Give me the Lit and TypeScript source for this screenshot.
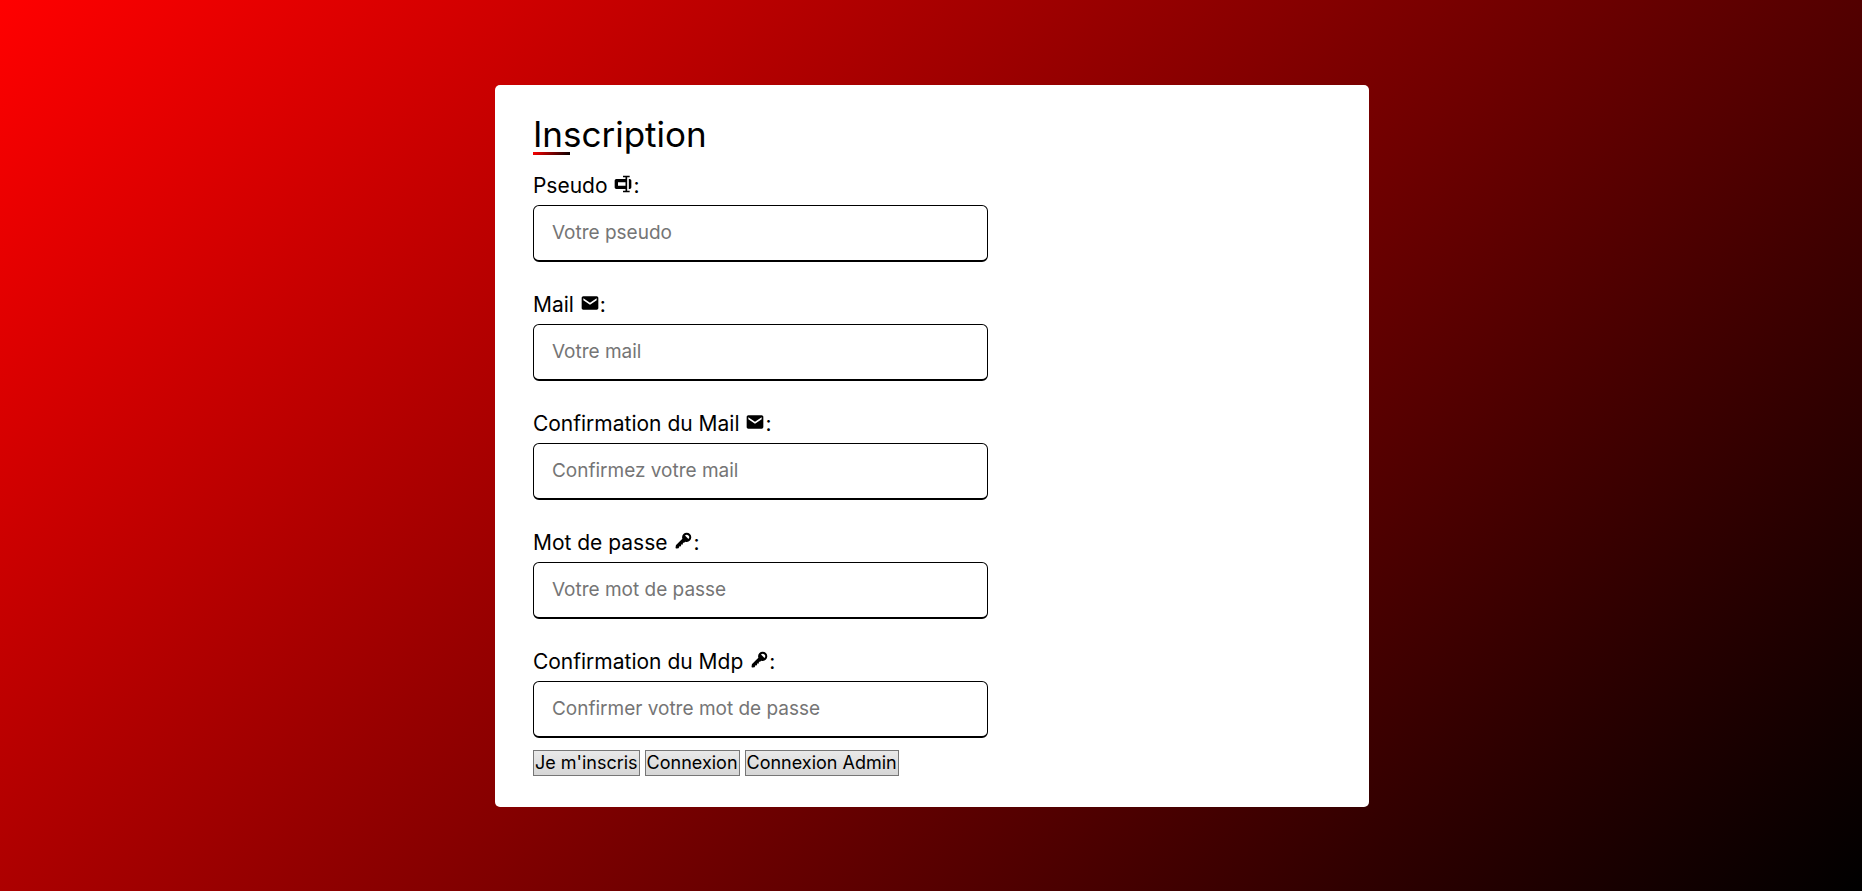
import { LitElement, html, css, svg } from "lit";
import { customElement } from "lit/decorators.js";

const icons = {
  rename: svg`<path fill-rule="evenodd" d="M12 2h8v2h-3v16h3v2h-8v-2h3v-2H4c-1.1 0-2-.9-2-2V8c0-1.100.9-2 2-2h11V4h-3zM6 10v4h9v-4z"/><path d="M19 6h1c1.100 0 2 .9 2 2v8c0 1.100-.9 2-2 2h-1z"/>`,
  mail: svg`<path d="M20 4H4c-1.103 0-2 .897-2 2v12c0 1.103.897 2 2 2h16c1.103 0 2-.897 2-2V6c0-1.103-.897-2-2-2zm0 4.700-8 5.334L4 8.700V6.297l8 5.333 8-5.333V8.700z"/>`,
  key: svg`<path d="M3.433 17.325 3.079 19.800a1 1 0 0 0 1.131 1.131l2.475-.354C7.060 20.524 8 18 8 18s.472.405.665.466c.412.130.813-.274.948-.684L10 16.010s.577.292.786.335c.266.055.524-.109.707-.293a.988.988 0 0 0 .241-.391L12 14.010s.675.187.906.214c.263.030.519-.104.707-.293l1.138-1.137a5.502 5.502 0 0 0 5.581-1.338 5.507 5.507 0 0 0 0-7.778 5.507 5.507 0 0 0-7.778 0 5.500 5.500 0 0 0-1.338 5.581l-7.501 7.500a.994.994 0 0 0-.282.566zM18.504 5.506a2.919 2.919 0 0 1 0 4.122l-4.122-4.122a2.919 2.919 0 0 1 4.122 0z"/>`,
};

interface Field {
  id: string;
  label: string;
  icon: keyof typeof icons;
  type: string;
  placeholder: string;
}

const fields: Field[] = [
  { id: "pseudo", label: "Pseudo", icon: "rename", type: "text", placeholder: "Votre pseudo" },
  { id: "mail", label: "Mail", icon: "mail", type: "email", placeholder: "Votre mail" },
  { id: "mail2", label: "Confirmation du Mail", icon: "mail", type: "email", placeholder: "Confirmez votre mail" },
  { id: "mdp", label: "Mot de passe", icon: "key", type: "password", placeholder: "Votre mot de passe" },
  { id: "mdp2", label: "Confirmation du Mdp", icon: "key", type: "password", placeholder: "Confirmer votre mot de passe" },
];

@customElement("app-root")
export class AppRoot extends LitElement {
  static styles = css`
    :host {
      display: flex;
      align-items: center;
      justify-content: center;
      box-sizing: border-box;
      min-height: 100vh;
      padding-left: 2px;
      background: linear-gradient(135deg, #ff0000, #000000);
      color: #000;
      font-family: Inter, "Liberation Sans", sans-serif;
    }
    .card {
      box-sizing: border-box;
      width: 47%;
      padding: 31px 38px;
      border-radius: 5px;
      background: #fff;
    }
    .title {
      margin: 0 0 19px;
      font-size: 35px;
      line-height: 36px;
      font-weight: 400;
    }
    .title::after {
      content: "";
      display: block;
      width: 37px;
      height: 3px;
      background: linear-gradient(135deg, #ff0000, #000000);
    }
    .fields {
      display: flex;
      flex-direction: column;
      gap: 31px;
    }
    .field {
      display: flex;
      flex-direction: column;
      align-items: flex-start;
      gap: 7px;
    }
    .label {
      display: flex;
      font-size: 21px;
      line-height: 24px;
      white-space: pre;
    }
    .icon {
      width: 20px;
      height: 20px;
      fill: currentColor;
    }
    .input {
      box-sizing: border-box;
      width: 57%;
      height: 57px;
      padding: 0 18px;
      border: 1px solid #000;
      border-bottom-width: 2px;
      border-radius: 6px;
      background: #fff;
      font-family: inherit;
      font-size: 19px;
      outline: none;
    }
    .input::placeholder {
      color: #757575;
      opacity: 1;
    }
    .actions {
      display: flex;
      flex-wrap: wrap;
      gap: 5px;
      margin-top: 12px;
    }
    .button {
      box-sizing: border-box;
      height: 26px;
      padding: 0 1px;
      border: 1px solid #767676;
      border-radius: 0;
      background: linear-gradient(#e9e9e9, #d6d6d6);
      color: #000;
      font-family: inherit;
      font-size: 18px;
      line-height: 24px;
    }
  `;

  render() {
    return html`
      <form class="card" @submit=${(e: Event) => e.preventDefault()}>
        <h1 class="title">Inscription</h1>
        <div class="fields">
          ${fields.map(
            (f) => html`
              <div class="field">
                <label class="label" for=${f.id}>${f.label + " "}<svg class="icon" viewBox="0 0 24 24" aria-hidden="true">${icons[f.icon]}</svg>:</label>
                <input class="input" id=${f.id} name=${f.id} type=${f.type} placeholder=${f.placeholder} />
              </div>
            `
          )}
        </div>
        <div class="actions">
          <button class="button" type="submit">Je m'inscris</button>
          <button class="button" type="button">Connexion</button>
          <button class="button" type="button">Connexion Admin</button>
        </div>
      </form>
    `;
  }
}
